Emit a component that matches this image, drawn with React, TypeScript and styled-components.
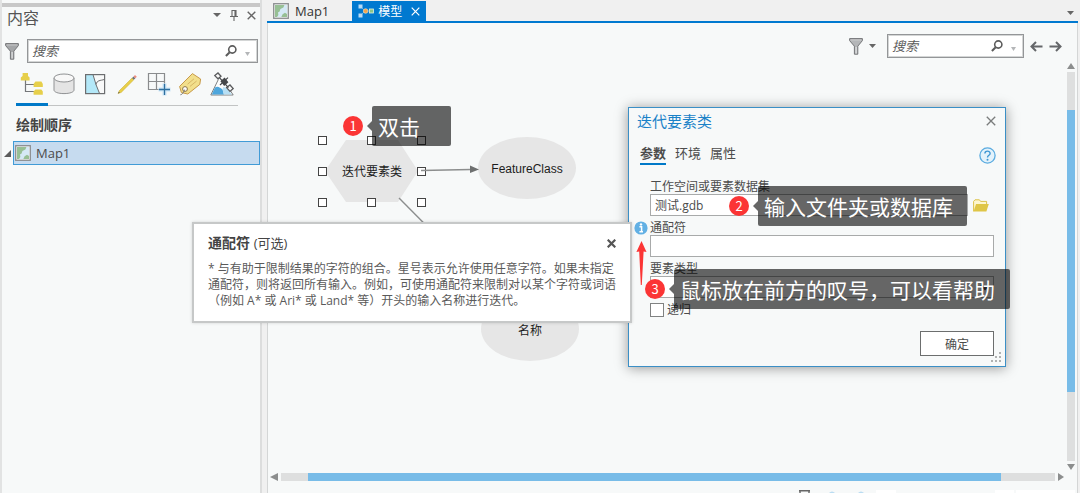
import React from "react";
import styled, { createGlobalStyle, css } from "styled-components";

const uiFont = `"Open Sans", "Noto Sans CJK SC", sans-serif`;
const cjkFont = `"Noto Sans CJK SC", sans-serif`;

const Global = createGlobalStyle`
  *, *::before, *::after { box-sizing: border-box; }
  body { margin: 0; background: #f0f0f0; font-family: ${uiFont}; color: #4c4c4c; }
  button, input, select { font-family: inherit; color: inherit; }
  svg { display: block; flex: none; }
`;

const Shell = styled.div`
  position: relative;
  display: flex;
  gap: 5px;
  height: 100vh;
  overflow: hidden;
  background: #f0f0f0;
`;

/* ---------- shared parts ---------- */

const IconButton = styled.button`
  display: flex;
  align-items: center;
  justify-content: center;
  padding: 0;
  border: 0;
  background: transparent;
  cursor: pointer;
`;

const SearchField = styled.div<{ $width?: number }>`
  display: flex;
  align-items: center;
  gap: 8px;
  height: 24px;
  padding: 0 7px 0 4px;
  border: 1px solid #949698;
  box-shadow: inset 0 0 0 1px #d4d6d6;
  background: #fff;
  ${(p) => (p.$width ? css`width: ${p.$width}px;` : css`flex: 1; min-width: 0;`)}

  input {
    flex: 1;
    min-width: 0;
    height: 20px;
    padding: 0;
    border: 0;
    outline: 0;
    background: transparent;
    font-size: 13px;
    font-style: italic;
  }
  input::placeholder { color: #5a5a5a; opacity: 1; }
`;

const Caret = ({ size = 7, color = "#666" }: { size?: number; color?: string }) => (
  <svg width={size} height={4} viewBox="0 0 8 4" preserveAspectRatio="none">
    <path d="M0 0H8L4 4Z" fill={color} />
  </svg>
);

const Cross = ({ size = 9, color = "#666", weight = 1.4 }: { size?: number; color?: string; weight?: number }) => (
  <svg width={size} height={size} viewBox="0 0 9 9">
    <path d="M.7 .7L8.3 8.3M8.3 .7L.7 8.3" stroke={color} strokeWidth={weight} fill="none" />
  </svg>
);

const Funnel = ({ fill = "#a4a6a8" }: { fill?: string }) => (
  <svg width="14" height="17" viewBox="0 0 14 17">
    <path d="M.6 .6H13.4V2.6L8.8 8.2V16.2H5.4V8.2L.6 2.6Z" fill={fill} stroke="#747678" strokeWidth="1" />
    <path d="M1.6 2H12.4" stroke="#d0d2d2" strokeWidth=".8" />
    <path d="M7.1 9V15.4" stroke="#e4e6e6" strokeWidth="1.2" />
  </svg>
);

const Magnifier = () => (
  <svg width="12" height="12" viewBox="0 0 12 12">
    <circle cx="7.3" cy="4.5" r="3.6" fill="none" stroke="#5c5c5c" strokeWidth="1.6" />
    <path d="M4.7 7.2L.9 11" stroke="#5c5c5c" strokeWidth="2" />
  </svg>
);

const FaintCaret = styled.span`
  padding-top: 5px;
`;

const Search = ({ label, width }: { label: string; width?: number }) => (
  <SearchField $width={width}>
    <input type="text" placeholder="搜索" aria-label={label} />
    <Magnifier />
    <FaintCaret>
      <Caret size={5} color="#b4b6b8" />
    </FaintCaret>
  </SearchField>
);

const MapIcon = () => (
  <svg width="16" height="16" viewBox="0 0 16 16">
    <rect x=".7" y=".7" width="14.6" height="14.6" fill="#f4f6f4" stroke="#8c8e90" strokeWidth="1.3" />
    <rect x="2" y="2" width="12" height="12" fill="#d5e9f5" />
    <path d="M2 2H11.4L10.4 4.4L7.4 6L6.6 8.6L5 9.4L5.4 12L4 14H2Z" fill="#97bf94" />
    <path d="M9.6 11.2L12 9.8L14 11V14H8.4Z" fill="#97bf94" />
  </svg>
);

/* ---------- contents pane ---------- */

const Pane = styled.aside`
  display: flex;
  flex: none;
  flex-direction: column;
  width: 262px;
  padding-top: 3px;
  border-left: 2px solid #e2e3e3;
  border-right: 2px solid #dcdddd;
  background: #f7f9f9;
`;

const PaneGrip = styled.div`
  flex: none;
  height: 4px;
  background: #c8c8c8;
`;

const PaneHeader = styled.header`
  display: flex;
  align-items: center;
  gap: 9px;
  height: 22px;
  padding: 0 4px 0 5px;

  h2 {
    flex: 1;
    margin: 0;
    font-size: 16px;
    font-weight: 400;
    line-height: 22px;
    color: #555;
  }
  button { height: 16px; margin-bottom: 6px; }
`;

const PaneSearch = styled.div`
  display: flex;
  align-items: center;
  gap: 8px;
  margin-top: 10px;
  padding: 0 2px 0 3px;
`;

const ListTabs = styled.div`
  display: flex;
  margin: 9px 22px 0 14px;
  border-bottom: 1px solid #c2c4c4;
`;

const ListTab = styled(IconButton)<{ $active?: boolean }>`
  flex: 1;
  height: 34px;
  margin-bottom: -1px;
  padding-bottom: 7px;
  border-bottom: 3px solid ${(p) => (p.$active ? "#0079c8" : "transparent")};
`;

const SectionTitle = styled.h3`
  margin: 9px 0 6px 14px;
  font-size: 14px;
  font-weight: 700;
  line-height: 20px;
  color: #444;
`;

const TreeRow = styled.div`
  display: flex;
  align-items: center;
  gap: 2px;
  padding-left: 2px;
`;

const TreeItem = styled.button`
  display: flex;
  flex: 1;
  align-items: center;
  gap: 5px;
  height: 24px;
  padding: 0 1px;
  border: 1px solid #419bd6;
  background: #c6dbef;
  font-size: 13px;
  text-align: left;
`;

const LayersIcon = () => (
  <svg width="24" height="24" viewBox="0 0 24 24">
    <path d="M5.5 7V19.5H14M5.5 12.5H14" fill="none" stroke="#75777a" strokeWidth="1.2" />
    <path d="M2.6 1H8V4L9.6 5.4V8.6H.8V5.4L2.6 4Z" fill="#e6cf4a" />
    <path d="M15.4 9.6H21.4L22.8 12V15H13.6V12Z" fill="#e6cf4a" />
    <path d="M15.4 17.4H21.4L22.8 19.4V22.8H13.6V19.4Z" fill="#e6cf4a" />
  </svg>
);

const DatabaseIcon = () => (
  <svg width="24" height="24" viewBox="0 0 24 24">
    <path d="M2 6V18C2 20 6 21.6 12 21.6S22 20 22 18V6" fill="#e4e4e4" stroke="#909294" strokeWidth="1" />
    <ellipse cx="12" cy="6" rx="10" ry="4" fill="#f8f8f8" stroke="#909294" strokeWidth="1" />
  </svg>
);

const SelectionIcon = () => (
  <svg width="24" height="24" viewBox="0 0 24 24">
    <rect x="2.6" y="2.6" width="19" height="19" fill="#f8f9f9" />
    <path d="M2.6 2.6H10L13 12.6L16.6 21.6H2.6Z" fill="#b3e8f8" />
    <path d="M10 2.6L13 12.6L16.6 21.6M13 12.6C14 8 17 8.8 21.6 7.4" fill="none" stroke="#6c6e70" strokeWidth="1" />
    <rect x="2.6" y="2.6" width="19" height="19" fill="none" stroke="#6c6e70" strokeWidth="1.2" />
  </svg>
);

const PencilIcon = () => (
  <svg width="24" height="24" viewBox="0 0 24 24">
    <path d="M3 21.6L4.4 18.6L17 6L18.8 7.8L6.2 20.4Z" fill="#e8cf48" stroke="#c9ad35" strokeWidth=".5" />
    <path d="M17 6L18.6 4.4L20.4 6.2L18.8 7.8Z" fill="#6d7377" />
    <path d="M18.6 4.4L20 3L21.8 4.8L20.4 6.2Z" fill="#ee8c80" />
    <path d="M3 21.6L3.8 19.8L4.8 20.8Z" fill="#555" />
  </svg>
);

const SnapIcon = () => (
  <svg width="24" height="24" viewBox="0 0 24 24">
    <path d="M1.5 1.5H17.5V17.5H1.5ZM9.5 1.5V17.5M1.5 9.5H17.5" fill="none" stroke="#8a8c8e" strokeWidth="1.2" />
    <path d="M17.5 11.5V23.5M11.5 17.5H23.5" stroke="#cce6f7" strokeWidth="4" />
    <path d="M17.5 12V23M12 17.5H23" stroke="#2e6f9f" strokeWidth="1.3" />
  </svg>
);

const LabelIcon = () => (
  <svg width="24" height="24" viewBox="0 0 24 24">
    <path d="M14.4 1.6L22.6 7L21.8 12.4L9.8 22L3.4 20.6L1.6 14.4Z" fill="#f2df8c" stroke="#c79a4a" strokeWidth="1" strokeLinejoin="round" />
    <path d="M9.6 12.2L16 6.8M12 14.4L18.6 9" stroke="#d7b665" strokeWidth="1" />
    <circle cx="7" cy="17" r="2.4" fill="#fff" stroke="#8b7346" strokeWidth="1" />
    <path d="M6.6 17.6C5.4 21 4 22.6 2.4 22.8" fill="none" stroke="#77797b" strokeWidth="1" />
  </svg>
);

const ImageryIcon = () => (
  <svg width="24" height="24" viewBox="0 0 24 24">
    <path d="M8.4 7.4L.8 23H23.2L18.6 16" fill="#fbfcfc" stroke="#7e8082" strokeWidth="1" />
    <path d="M5 15.4C8 13.6 10 15.6 12.6 17.6L14 22.6H1.8Z" fill="#4ea6dc" />
    <path d="M13 15C16 15.4 18 17 19.2 18.8L21.8 22.6H13.8L12.6 17.6Z" fill="#b7dff4" />
    <path d="M4.8 3.6L8 1L11 4.2L8 6.8ZM16.6 15.6L20 13L23.2 16.6L20 19.4Z" fill="#f8f8f8" stroke="#5a5c5e" strokeWidth="1.3" />
    <path d="M10.4 9.2L14.6 5.4L18.4 10.2L14.2 14Z" fill="#45474a" />
    <path d="M9.4 5.6L18.4 15.6M10 13L18 5.6" stroke="#45474a" strokeWidth="1.2" />
  </svg>
);

const listTabs: { label: string; icon: React.ReactNode }[] = [
  { label: "按绘制顺序列出", icon: <LayersIcon /> },
  { label: "按数据源列出", icon: <DatabaseIcon /> },
  { label: "按选择列出", icon: <SelectionIcon /> },
  { label: "按编辑列出", icon: <PencilIcon /> },
  { label: "按捕捉列出", icon: <SnapIcon /> },
  { label: "按标注列出", icon: <LabelIcon /> },
  { label: "按影像列出", icon: <ImageryIcon /> },
];

const ContentsPane = () => (
  <Pane>
    <PaneGrip />
    <PaneHeader>
      <h2>内容</h2>
      <IconButton aria-label="菜单">
        <Caret size={8} />
      </IconButton>
      <IconButton aria-label="固定">
        <svg width="8" height="11" viewBox="0 0 8 11">
          <path d="M2 .5H6V6.5H2ZM0 6.5H8M4 6.5V11M5 1V6" fill="none" stroke="#666" strokeWidth="1.1" />
        </svg>
      </IconButton>
      <IconButton aria-label="关闭">
        <Cross />
      </IconButton>
    </PaneHeader>
    <PaneSearch>
      <Funnel />
      <Search label="搜索内容" />
    </PaneSearch>
    <ListTabs>
      {listTabs.map((t, i) => (
        <ListTab key={t.label} aria-label={t.label} $active={i === 0}>
          {t.icon}
        </ListTab>
      ))}
    </ListTabs>
    <SectionTitle>绘制顺序</SectionTitle>
    <TreeRow>
      <svg width="7" height="7" viewBox="0 0 7 7">
        <path d="M7 0V7H0Z" fill="#5c5c5c" />
      </svg>
      <TreeItem>
        <MapIcon />
        Map1
      </TreeItem>
    </TreeRow>
  </Pane>
);

/* ---------- document area ---------- */

const DocumentArea = styled.main`
  display: flex;
  flex: 1;
  flex-direction: column;
  min-width: 0;
  padding-right: 2px;
`;

const TabStrip = styled.nav`
  display: flex;
  flex: none;
  align-items: flex-end;
  height: 23px;
  padding-right: 4px;
  border-bottom: 2px solid #0079d0;
`;

const DocTab = styled.button<{ $active?: boolean }>`
  display: flex;
  align-items: center;
  gap: ${(p) => (p.$active ? 4 : 6)}px;
  height: 20px;
  padding: 0 6px;
  border: 0;
  background: ${(p) => (p.$active ? "#0079d0" : "transparent")};
  color: ${(p) => (p.$active ? "#fff" : "#333")};
  font-size: ${(p) => (p.$active ? 12 : 13)}px;
  margin-right: ${(p) => (p.$active ? 0 : 17)}px;

  svg:last-child:not(:first-child) { margin-left: 5px; }
`;

const StripMenu = styled(IconButton)`
  height: 16px;
  margin-left: auto;
`;

const Workspace = styled.div`
  display: grid;
  flex: 1;
  grid-template: minmax(0, 1fr) 8px / minmax(0, 1fr) 10px;
  min-height: 0;
  border: 1px solid #d4d6d6;
  border-width: 0 1px;
  background: #f7f9f9;
`;

const Canvas = styled.section`
  position: relative;
  overflow: hidden;
`;

const CanvasTools = styled.div`
  display: flex;
  align-items: center;
  justify-content: flex-end;
  gap: 6px;
  padding: 11px 5px 0 0;

  > div { margin: 0 0 0 5px; }
`;

const VerticalBar = styled.div`
  display: flex;
  flex-direction: column;
  align-items: center;
  gap: 3px;
  width: 8px;
  padding: 40px 0 3px;
`;

const HorizontalBar = styled.div`
  display: flex;
  align-items: center;
  gap: 3px;
  padding: 0 3px 0 2px;
`;

const Track = styled.div<{ $vertical?: boolean }>`
  display: flex;
  flex: 1;
  flex-direction: ${(p) => (p.$vertical ? "column" : "row")};
  align-self: stretch;
  background: #dedfdf;
`;

const TrackPart = styled.div<{ $share: number; $thumb?: boolean }>`
  flex: ${(p) => p.$share} 1 0;
  background: ${(p) => (p.$thumb ? "#78bce8" : "transparent")};
`;

const StatusStrip = styled.footer`
  display: flex;
  flex: none;
  align-items: flex-end;
  justify-content: flex-end;
  gap: 2px;
  height: 12px;
  border: 1px solid #d4d6d6;
  border-width: 0 1px;
  padding-right: 2px;
  background: #f7f9f9;
`;

const StatusSlot = styled.div<{ $width: number; $gap?: number }>`
  width: ${(p) => p.$width}px;
  height: 3px;
  margin-right: ${(p) => p.$gap ?? 0}px;
  background: #fff;
`;

/* ---------- model diagram ---------- */

const Drawing = styled.svg`
  position: absolute;
  inset: 0;
`;

const NodeText = styled.span<{ $x: number; $y: number }>`
  position: absolute;
  left: ${(p) => p.$x}px;
  top: ${(p) => p.$y}px;
  width: 98px;
  font: 12px/18px "Liberation Sans", "Noto Sans CJK SC", sans-serif;
  color: #1c1c1c;
  text-align: center;
`;

const handles = [54, 103, 153].flatMap((x) =>
  [117, 148, 179].filter((y) => !(x === 103 && y === 148)).map((y) => ({ x, y }))
);

const Diagram = () => (
  <>
    <Drawing width="100%" height="100%">
      <path d="M78 117H130L150 148L130 179H78L57 148Z" fill="#e6e6e6" />
      <ellipse cx="259" cy="145" rx="49" ry="31" fill="#e6e6e6" />
      <ellipse cx="262" cy="306" rx="49" ry="32" fill="#e6e6e6" />
      <path d="M131 175L230 275" stroke="#8c8e8e" strokeWidth="1.4" />
      {handles.map((h) => (
        <rect key={`${h.x}-${h.y}`} x={h.x - 3.5} y={h.y - 3.5} width="8" height="8" fill="#fff" stroke="#444" />
      ))}
      <path d="M153 147.5L203 146.5" stroke="#8c8e8e" strokeWidth="1.4" />
      <path d="M202 142.5L211 146.5L202 150Z" fill="#6e7070" />
    </Drawing>
    <NodeText $x={55} $y={140}>迭代要素类</NodeText>
    <NodeText $x={210} $y={137}>FeatureClass</NodeText>
    <NodeText $x={213} $y={299}>名称</NodeText>
  </>
);

const NavArrow = ({ flip }: { flip?: boolean }) => (
  <svg width="13" height="11" viewBox="0 0 13 11">
    <path
      d={flip ? "M.5 5.5H11.5M7 1L11.5 5.5L7 10" : "M12.5 5.5H1.5M6 1L1.5 5.5L6 10"}
      fill="none"
      stroke="#65676a"
      strokeWidth="2"
    />
  </svg>
);

const ModelDocument = () => (
  <DocumentArea>
    <TabStrip>
      <DocTab>
        <MapIcon />
        Map1
      </DocTab>
      <DocTab $active>
        <svg width="16" height="14" viewBox="0 0 16 14">
          <path d="M3 3L7 7L3 11M7 7H13" fill="none" stroke="#5aa7e0" />
          <path d="M.5 .5H4.5V4.5H.5ZM.5 9.5H4.5V13.5H.5Z" fill="#b8dbf5" />
          <circle cx="7.6" cy="7" r="2.3" fill="#f3a64c" stroke="#fde3bd" strokeWidth=".6" />
          <rect x="11.4" y="5" width="4" height="4" fill="#8cc58a" stroke="#e4f6df" strokeWidth=".8" />
        </svg>
        模型
        <Cross color="#fff" weight={1.2} />
      </DocTab>
      <StripMenu aria-label="文档列表">
        <Caret />
      </StripMenu>
    </TabStrip>
    <Workspace>
      <Canvas>
        <Diagram />
        <CanvasTools>
          <Funnel fill="#b4b6b8" />
          <Caret />
          <Search label="搜索模型" width={137} />
          <IconButton aria-label="上一个">
            <NavArrow />
          </IconButton>
          <IconButton aria-label="下一个">
            <NavArrow flip />
          </IconButton>
        </CanvasTools>
      </Canvas>
      <VerticalBar>
        <svg width="8" height="6" viewBox="0 0 8 6">
          <path d="M0 6H8L4 0Z" fill="#8c8e8e" />
        </svg>
        <Track $vertical>
          <TrackPart $share={38} />
          <TrackPart $share={282} $thumb />
          <TrackPart $share={69} />
        </Track>
        <svg width="8" height="6" viewBox="0 0 8 6">
          <path d="M0 0H8L4 6Z" fill="#8c8e8e" />
        </svg>
      </VerticalBar>
      <HorizontalBar>
        <svg width="8" height="8" viewBox="0 0 8 8">
          <path d="M8 0V8L0 4Z" fill="#8c8e8e" />
        </svg>
        <Track>
          <TrackPart $share={27} />
          <TrackPart $share={692} $thumb />
          <TrackPart $share={54} />
        </Track>
        <svg width="6" height="8" viewBox="0 0 6 8">
          <path d="M0 0V8L6 4Z" fill="#8c8e8e" />
        </svg>
      </HorizontalBar>
    </Workspace>
    <StatusStrip>
      <svg width="76" height="3" viewBox="0 0 76 3">
        <path d="M1 .8H12M2 1V3M11 1V3" stroke="#666" strokeWidth="1.4" />
        <path d="M31 3Q34 0 37 3ZM60 3Q63 0 66 3Z" fill="#b9dcf2" />
      </svg>
      <StatusSlot $width={20} $gap={97} />
      <StatusSlot $width={19} />
      <StatusSlot $width={59} />
    </StatusStrip>
  </DocumentArea>
);

/* ---------- tool dialog ---------- */

const Dialog = styled.form`
  position: absolute;
  left: 628px;
  top: 107px;
  width: 378px;
  padding: 0 11px 10px 21px;
  border: 1px solid #3b8fc6;
  background: #f7f9f9;
  box-shadow: 0 1px 12px rgba(0, 0, 0, 0.4);
  font-size: 12px;
`;

const DialogHeader = styled.header`
  display: flex;
  align-items: center;
  justify-content: space-between;
  height: 25px;
  margin: 0 -2px 0 -13px;

  h2 {
    margin: 0;
    font-size: 15px;
    font-weight: 400;
    line-height: 20px;
    color: #1a82c8;
  }
`;

const DialogTabs = styled.div`
  display: flex;
  align-items: center;
  gap: 9px;
  margin: 10px 0 15px -10px;
`;

const DialogTab = styled.button<{ $active?: boolean }>`
  height: 22px;
  padding: 0;
  border: 0;
  border-bottom: 2px solid ${(p) => (p.$active ? "#0079c8" : "transparent")};
  background: transparent;
  font-size: 13px;
  line-height: 20px;
  font-weight: ${(p) => (p.$active ? 700 : 400)};
`;

const HelpButton = styled(IconButton)`
  margin: 3px -2px 0 auto;
`;

const Fields = styled.div`
  display: flex;
  flex-direction: column;
  gap: 5px;
`;

const Field = styled.div`
  position: relative;
  display: flex;
  flex-wrap: wrap;
  align-items: center;

  > label {
    width: 100%;
    line-height: 14px;
  }
`;

const control = css`
  flex: 1;
  min-width: 0;
  height: 22px;
  padding: 0 4px;
  border: 1px solid #a8aaaa;
  border-radius: 0;
  background: #fff;
  font-size: 12px;
`;

const TextInput = styled.input`${control}`;
const Picker = styled.select`${control}`;

const BrowseButton = styled(IconButton)`
  width: 26px;
`;

const InfoMark = styled.span`
  position: absolute;
  left: -16px;
  top: 0;
`;

const CheckRow = styled.label`
  display: flex;
  align-items: center;
  gap: 3px;
  height: 14px;
  line-height: 14px;

  input {
    appearance: none;
    width: 14px;
    height: 14px;
    margin: 0;
    border: 1px solid #808282;
    background: #fff;
  }
`;

const DialogFooter = styled.footer`
  display: flex;
  justify-content: flex-end;
  margin-top: 14px;

  button {
    width: 74px;
    height: 25px;
    padding: 0;
    border: 1px solid #6c6e6e;
    background: #fff;
    font-size: 12px;
  }
`;

const ResizeGrip = styled.svg`
  position: absolute;
  right: 4px;
  bottom: 4px;
`;

const ToolDialog = () => (
  <Dialog onSubmit={(e) => e.preventDefault()}>
    <DialogHeader>
      <h2>迭代要素类</h2>
      <IconButton type="button" aria-label="关闭">
        <Cross size={10} color="#7a7c7c" weight={1.2} />
      </IconButton>
    </DialogHeader>
    <DialogTabs>
      <DialogTab type="button" $active>参数</DialogTab>
      <DialogTab type="button">环境</DialogTab>
      <DialogTab type="button">属性</DialogTab>
      <HelpButton type="button" aria-label="帮助">
        <svg width="17" height="17" viewBox="0 0 17 17">
          <circle cx="8.5" cy="8.5" r="7.6" fill="#e3f2fb" stroke="#5aabe0" strokeWidth="1.3" />
          <path d="M5.9 6.6C5.9 3.4 11.1 3.4 11.1 6.4C11.1 8.4 8.5 8.2 8.5 10.6" fill="none" stroke="#3f97d4" strokeWidth="1.4" />
          <circle cx="8.5" cy="12.8" r="1" fill="#3f97d4" />
        </svg>
      </HelpButton>
    </DialogTabs>
    <Fields>
      <Field>
        <label htmlFor="workspace">工作空间或要素数据集</label>
        <TextInput id="workspace" type="text" defaultValue="测试.gdb" />
        <BrowseButton type="button" aria-label="浏览">
          <svg width="16" height="13" viewBox="0 0 16 13">
            <path d="M.6 12.4V2.4L2 .8H6.4L7.6 2.4H13.6V5" fill="#fdf6cf" stroke="#dcc24a" strokeWidth="1" />
            <path d="M3 5H15.8L13.4 12.4H.6Z" fill="#dfc647" />
          </svg>
        </BrowseButton>
      </Field>
      <Field>
        <InfoMark>
          <svg width="14" height="14" viewBox="0 0 14 14">
            <circle cx="7" cy="7" r="6.6" fill="#62b0e4" />
            <path d="M5.4 5.8H7.6V10.6M5.4 10.8H9" fill="none" stroke="#fff" strokeWidth="1.5" />
            <circle cx="7" cy="3.4" r="1.2" fill="#fff" />
          </svg>
        </InfoMark>
        <label htmlFor="wildcard">通配符</label>
        <TextInput id="wildcard" type="text" />
      </Field>
      <Field>
        <label htmlFor="featureType">要素类型</label>
        <Picker id="featureType" />
      </Field>
      <CheckRow>
        <input type="checkbox" />
        递归
      </CheckRow>
    </Fields>
    <DialogFooter>
      <button type="submit">确定</button>
    </DialogFooter>
    <ResizeGrip width="10" height="10" viewBox="0 0 10 10">
      <path d="M8 0h2v2H8zM4 4h2v2H4zM8 4h2v2H8zM0 8h2v2H0zM4 8h2v2H4zM8 8h2v2H8z" fill="#b0b2b2" />
    </ResizeGrip>
  </Dialog>
);

/* ---------- help popup ---------- */

const HelpPopup = styled.article`
  position: absolute;
  left: 192px;
  top: 222px;
  width: 440px;
  padding: 10px 12px 12px 14px;
  border: 2px solid #c6c8c8;
  background: #fff;
  box-shadow: 0 0 3px rgba(0, 0, 0, 0.15);

  header {
    display: flex;
    align-items: center;
    justify-content: space-between;
    height: 18px;
    margin-bottom: 9px;
  }
  h3 {
    margin: 0;
    font-size: 14px;
    line-height: 18px;
    color: #444;
  }
  h3 small { font-size: 13px; font-weight: 400; }
  p {
    margin: 0;
    font-size: 12px;
    line-height: 16px;
    white-space: nowrap;
    color: #5a5a5a;
  }
  header button { margin-right: 2px; }
`;

/* ---------- numbered annotations ---------- */

const Annotation = styled.div<{ $x: number; $y: number }>`
  position: absolute;
  left: ${(p) => p.$x}px;
  top: ${(p) => p.$y}px;
  display: flex;
  align-items: center;
  gap: 9px;
`;

const Badge = styled.span`
  width: 20px;
  height: 20px;
  border-radius: 50%;
  background: #fb3535;
  color: #fff;
  font: 13px/20px ${cjkFont};
  text-align: center;
`;

const Callout = styled.span<{ $width: number }>`
  position: relative;
  width: ${(p) => p.$width}px;
  height: 40px;
  padding-left: 6px;
  border-radius: 2px;
  background: rgba(0, 0, 0, 0.6);
  color: #fff;
  font: 21px/40px ${cjkFont};
  white-space: nowrap;

  &::before {
    content: "";
    position: absolute;
    left: -5px;
    top: 15px;
    border: 5px solid transparent;
    border-left-width: 0;
    border-right-color: rgba(0, 0, 0, 0.6);
  }
`;

const PointerArrow = styled.svg`
  position: absolute;
  left: 636px;
  top: 241px;
`;

const notes = [
  { x: 343, y: 106, width: 79, text: "双击" },
  { x: 729, y: 186, width: 209, text: "输入文件夹或数据库" },
  { x: 645, y: 269, width: 336, text: "鼠标放在前方的叹号，可以看帮助" },
];

export default function App() {
  return (
    <Shell>
      <Global />
      <ContentsPane />
      <ModelDocument />
      <ToolDialog />
      <HelpPopup>
        <header>
          <h3>
            通配符 <small>(可选)</small>
          </h3>
          <IconButton aria-label="关闭">
            <Cross color="#555" weight={2.2} />
          </IconButton>
        </header>
        <p>
          * 与有助于限制结果的字符的组合。星号表示允许使用任意字符。如果未指定
          <br />
          通配符，则将返回所有输入。例如，可使用通配符来限制对以某个字符或词语
          <br />
          （例如 A* 或 Ari* 或 Land* 等）开头的输入名称进行迭代。
        </p>
      </HelpPopup>
      <PointerArrow width="11" height="44" viewBox="0 0 11 44">
        <path d="M5.5 0L10.5 11L7.6 10.4L5.8 44H4.8L3.2 10.4L.4 11Z" fill="#fb3535" />
      </PointerArrow>
      {notes.map((n, i) => (
        <Annotation key={n.text} $x={n.x} $y={n.y}>
          <Badge>{i + 1}</Badge>
          <Callout $width={n.width}>{n.text}</Callout>
        </Annotation>
      ))}
    </Shell>
  );
}
